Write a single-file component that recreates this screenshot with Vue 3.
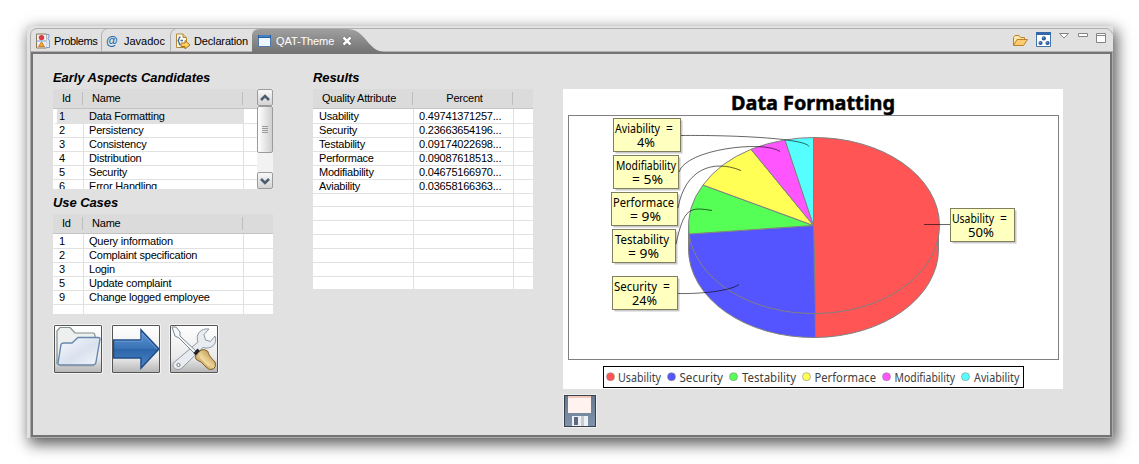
<script setup>
const useCases = [
  [1, 'Query information'], [2, 'Complaint specification'], [3, 'Login'],
  [5, 'Update complaint'], [9, 'Change logged employee'], ['', ''],
]
const aspects = [
  [1, 'Data Formatting'], [2, 'Persistency'], [3, 'Consistency'],
  [4, 'Distribution'], [5, 'Security'], [6, 'Error Handling'],
]
const results = [
  ['Usability', '0.49741371257...'], ['Security', '0.23663654196...'],
  ['Testability', '0.09174022698...'], ['Performace', '0.09087618513...'],
  ['Modifiability', '0.04675166970...'], ['Aviability', '0.03658166363...'],
  ...Array.from({ length: 7 }, () => ['', '']),
]
const labels = [
  { x: 50.5, y: 29.5, w: 67, a: 'Aviability', ax: 52, aw: 45, ex: 103, b: '4%', bx: 74, bw: 18 },
  { x: 50.5, y: 66.5, w: 65, a: 'Modifiability', ax: 53, aw: 60, b: '= 5%', bx: 69, bw: 31 },
  { x: 48.5, y: 103.5, w: 66, a: 'Performace', ax: 50, aw: 61, b: '= 9%', bx: 67, bw: 31 },
  { x: 49.5, y: 140.5, w: 63, a: 'Testability', ax: 52, aw: 54, b: '= 9%', bx: 65, bw: 31 },
  { x: 49.5, y: 187.5, w: 65, a: 'Security', ax: 51, aw: 43, ex: 100, b: '24%', bx: 69, bw: 25 },
  { x: 387.5, y: 119.5, w: 64, a: 'Usability', ax: 389, aw: 42, ex: 437, b: '50%', bx: 405, bw: 26 },
]
const legend = [
  { c: '#ff5555', d: 47.5, x: 55, w: 43, t: 'Usability' },
  { c: '#5555ff', d: 108.5, x: 116.5, w: 43.5, t: 'Security' },
  { c: '#55ff55', d: 170.5, x: 179, w: 54, t: 'Testability' },
  { c: '#ffff55', d: 243.5, x: 251.5, w: 61.5, t: 'Performace' },
  { c: '#ff55ff', d: 323.5, x: 331.5, w: 60.5, t: 'Modifiability' },
  { c: '#55ffff', d: 402.5, x: 411, w: 45.5, t: 'Aviability' },
]
</script>

<template>
  <div class="page">
    <div class="window">
      <header class="strip">
        <svg class="strip-bg" width="1086" height="26" viewBox="27 26 1086 26">
          <defs>
            <linearGradient id="act" x1="0" y1="0" x2="0" y2="1">
              <stop offset="0" stop-color="#a0a0a0" /><stop offset="1" stop-color="#747474" />
            </linearGradient>
          </defs>
          <path d="M30.500 52V35Q31 28.500 38 28.500H1106Q1111 29 1112.500 34" fill="none" stroke="#b0b0b0" />
          <path d="M101.500 52V35Q102 30 107 28.500M170.500 52V35Q171 30 176 28.500" fill="none" stroke="#b0b0b0" />
          <path d="M30 51.500H1113" stroke="#b0b0b0" />
          <path d="M252 52V35Q253 29 259 29H347C357 29 361 34 367 41C372 47 376 51 384 52Z" fill="url(#act)" />
        </svg>
        <nav class="tabs">
          <div class="tab t1">
            <svg width="16" height="16" viewBox="0 0 16 16">
              <path d="M1.500 1H11.500V15H1.500Z" fill="#eaf0fa" stroke="#8b7a55" />
              <path d="M11.500 1.500H14V4L13 5.500L14.500 8V14.500H11" fill="#d9e8fb" stroke="#7b9dca" />
              <path d="M1 8H11" stroke="#7b9dca" /><circle cx="6.500" cy="4.600" r="2.700" fill="#e03740" />
              <path d="M6.500 9L9.500 13.500H3.500Z" fill="#f6ac36" stroke="#cf7c20" />
            </svg><span>Problems</span>
          </div>
          <div class="tab t2"><b class="at">@</b><span>Javadoc</span></div>
          <div class="tab t3">
            <svg width="16" height="16" viewBox="0 0 16 16">
              <path d="M1.500 1H8L11.500 4.500V14.500H1.500Z" fill="#fffaf0" stroke="#b38a36" />
              <path d="M8 1V4.500H11.500" fill="#e9ca86" stroke="#b38a36" />
              <path d="M5.500 4C3 4 5 7.500 2.500 7.500C5 7.500 3 11.500 5.500 12M5.500 7.500H8" fill="none" stroke="#376ba7" stroke-width="1.400" />
              <path d="M6 10H10V7.500L15 12L10 16V13.500H6Z" fill="#ffd45d" stroke="#ac7420" />
            </svg><span>Declaration</span>
          </div>
          <div class="tab t4">
            <svg width="13" height="13" viewBox="0 0 13 13"><path d="M.5.500H12.500V11.500H.5Z" fill="#eef7ff" stroke="#4f79a9" /><path d="M0 0H13V3H0Z" fill="#235fa9" /><path d="M1 1H12" stroke="#67a3e1" /></svg>
            <span>QAT-Theme</span>
            <svg class="close" width="10" height="10" viewBox="0 0 10 10"><path d="M1.500 1.500L8.500 8.500M8.500 1.500L1.500 8.500" stroke="#555" stroke-width="3.800" /><path d="M1.500 1.500L8.500 8.500M8.500 1.500L1.500 8.500" stroke="#fff" stroke-width="2.600" /></svg>
          </div>
        </nav>
        <svg class="tools" width="96" height="22" viewBox="1010 29 96 22">
          <path d="M1013.500 45.500V37.500L1015 35.500H1019L1020.500 37.500H1024.500V39.500" fill="#ffe7a4" stroke="#bd812b" />
          <path d="M1013.500 45.500L1017 39.500H1027.500L1023.500 45.500Z" fill="#fcca70" stroke="#bd812b" />
          <path d="M1036.500 32.500H1050.500V46.500H1036.500Z" fill="#fff" stroke="#4273a9" /><path d="M1036 32H1051V35H1036Z" fill="#3468aa" />
          <g fill="#28599a"><circle cx="1043.800" cy="38.400" r="2.100" /><circle cx="1040.500" cy="43" r="2.100" /><circle cx="1047.500" cy="43" r="2.100" /></g>
          <g fill="#99bce5"><circle cx="1043.200" cy="37.800" r=".7" /><circle cx="1040" cy="42.500" r=".7" /><circle cx="1047" cy="42.500" r=".7" /></g>
          <g fill="#fff" stroke="#858585"><path d="M1059.500 33.500H1068.500L1064 38Z" /><path d="M1078.500 33.500H1087.500V36.500H1078.500Z" /><path d="M1096.500 33.500H1105.500V42.500H1096.500ZM1096.500 35.500H1105.500" /></g>
        </svg>
      </header>

      <main class="view">
        <section class="left">
          <h2>Early Aspects Candidates</h2>
          <div class="scrolled">
            <div class="table aspects">
              <div class="row head"><div>Id</div><div>Name</div><div></div></div>
              <div v-for="(r, i) in aspects" :key="i" class="row" :class="{ selected: i === 0 }"><div>{{ r[0] }}</div><div>{{ r[1] }}</div><div></div></div>
            </div>
            <div class="scrollbar">
              <div class="arrow"><svg width="14" height="15" viewBox="0 0 14 15"><path d="M3 10L7 6L11 10" /></svg></div>
              <div class="thumb"><i></i><i></i><i></i><i></i></div>
              <div class="arrow down"><svg width="14" height="15" viewBox="0 0 14 15"><path d="M3 6L7 10L11 6" /></svg></div>
            </div>
          </div>
          <h2 class="second">Use Cases</h2>
          <div class="table">
            <div class="row head"><div>Id</div><div>Name</div><div></div></div>
            <div v-for="(r, i) in useCases" :key="i" class="row"><div>{{ r[0] }}</div><div>{{ r[1] }}</div><div></div></div>
          </div>
          <div class="buttons">
            <button><svg width="46" height="46" viewBox="0 0 46 46">
              <defs><linearGradient id="fold" x1="0" y1="0" x2="1" y2="1"><stop stop-color="#f7f9fd" /><stop offset=".55" stop-color="#dae2ef" /><stop offset="1" stop-color="#f2f5fa" /></linearGradient></defs>
              <path d="M2 38V5L5 1.500H15L20 7H38Q40 7 40 10V16" fill="#edf0ef" stroke="#80908f" stroke-width="1.200" />
              <path d="M3 37L6 18.500Q6.500 17 9 17H17L23 11.500H43Q45 11.500 45 13L41 36Q40.500 39 38 39H5Q2.500 39 3 37Z" fill="url(#fold)" stroke="#6787ad" stroke-width="1.400" />
              <path d="M5 40H39" stroke="#999" opacity=".6" />
            </svg></button>
            <button><svg width="46" height="46" viewBox="0 0 46 46">
              <defs><linearGradient id="arr" x1="0" y1="0" x2="0" y2="1"><stop stop-color="#6095d2" /><stop offset=".5" stop-color="#3972b5" /><stop offset=".51" stop-color="#2c65a9" /><stop offset="1" stop-color="#4b87c7" /></linearGradient></defs>
              <path d="M.5 14H28V4L46 23L28 42V32H.5Z" fill="url(#arr)" stroke="#204b86" stroke-width="1.500" /><path d="M1.500 15.200H29V7L44 23" fill="none" stroke="#75a7df" opacity=".7" />
            </svg></button>
            <button><svg width="46" height="46" viewBox="0 0 46 46">
              <defs><linearGradient id="hand" x1="0" y1="1" x2="1" y2="0"><stop stop-color="#9d712d" /><stop offset=".5" stop-color="#ecd294" /><stop offset="1" stop-color="#a5752f" /></linearGradient></defs>
              <path d="M3.500 36L27 16C24 8 30 2 38 3L33 8.500L34.500 14L39.500 15.500L44 10C47 18 40 24 32 21.500L11 42C6 46-1 41 3.500 36Z" fill="#e8ebef" stroke="#8e98a4" />
              <circle cx="7.500" cy="39" r="1.600" fill="#fff" stroke="#777" />
              <path d="M1 1L5 1L9 6L9 10L26 26L24 28L8 12L4 10Z" fill="#f5f7f8" stroke="#7d8791" />
              <path d="M22.500 27L26.500 22.500L29 25L25 30Z" fill="#202329" />
              <path d="M25 29.500L30 24Q34 22.500 37 25.500Q37 29 44 36Q46 40 42.500 43Q38 45 35 41Q30 35 26 34Q23 32 25 29.500Z" fill="url(#hand)" stroke="#805d29" />
              <path d="M29 30.500L38 39.500" stroke="#fff0be" stroke-width="1.500" opacity=".6" />
            </svg></button>
          </div>
        </section>

        <section class="middle">
          <h2>Results</h2>
          <div class="table results">
            <div class="row head"><div>Quality Attribute</div><div>Percent</div><div></div></div>
            <div v-for="(r, i) in results" :key="i" class="row"><div>{{ r[0] }}</div><div>{{ r[1] }}</div><div></div></div>
          </div>
        </section>

        <section class="right">
          <svg class="chart" width="500" height="300" viewBox="0 0 500 300">
            <text class="title" x="168" y="21" textLength="164" lengthAdjust="spacingAndGlyphs">Data Formatting</text>
            <rect x="5.500" y="26.500" width="490" height="244" fill="none" stroke="#808080" />
            <g stroke="#808080" stroke-width="1">
              <path d="M250.500 136.500L252.500 248.500A125 88.500 0 0 0 375.500 160V136.500Z" fill="#f55" />
              <path d="M250.500 136.500L252.500 248.500A125 88.500 0 0 1 125.500 160V136.500Z" fill="#55f" />
              <path d="M125.500 136V162L126.500 150V143Z" fill="#5f5" />
              <path d="M250.500 136.500V48.500A125 88 0 0 1 252.500 224.500Z" fill="#f55" />
              <path d="M250.500 136.500L252.500 224.500A125 88 0 0 1 126 145Z" fill="#55f" />
              <path d="M250.500 136.500L126 145A125 88 0 0 1 140 96Z" fill="#5f5" />
              <path d="M250.500 136.500L140 96A125 88 0 0 1 188 60.300Z" fill="#ff5" />
              <path d="M250.500 136.500L188 60.300A125 88 0 0 1 222 51Z" fill="#f5f" />
              <path d="M250.500 136.500L222 51A125 88 0 0 1 250.500 48.500Z" fill="#5ff" />
            </g>
            <g v-for="l in labels" :key="l.a">
              <rect :x="l.x + 2" :y="l.y + 2" :width="l.w" height="33" fill="#c9c9c9" />
              <rect :x="l.x" :y="l.y" :width="l.w" height="33" fill="#ffffc0" stroke="#808060" />
              <text class="label" :x="l.ax" :y="l.y + 14.500" :textLength="l.aw" lengthAdjust="spacingAndGlyphs">{{ l.a }}</text>
              <text v-if="l.ex" class="label" :x="l.ex" :y="l.y + 14.500">=</text>
              <text class="label" :x="l.bx" :y="l.y + 28.500" :textLength="l.bw" lengthAdjust="spacingAndGlyphs">{{ l.b }}</text>
            </g>
            <g fill="none" stroke="#000" stroke-opacity=".6">
              <path d="M118 46.500C167 46 242 49 246 57.500" />
              <path d="M116 83C123 60 201 51 217 62.500" transform="translate(0 0)" />
              <path d="M115 119C122 80 150 70 178 81.500" transform="translate(0 0)" />
              <path d="M113 155C121 118 127 118 149 121.500" />
              <path d="M115 204.500C138 205 167 202 176 195.500" />
              <path d="M361 135.500H387" />
            </g>
            <rect x="40.500" y="277.500" width="420" height="21" fill="#fff" stroke="#000" />
            <g v-for="l in legend" :key="l.t">
              <circle :cx="l.d" cy="287.700" r="4" :fill="l.c" stroke="#888" stroke-width=".6" />
              <text class="label key" :x="l.x" y="292.500" :textLength="l.w" lengthAdjust="spacingAndGlyphs">{{ l.t }}</text>
            </g>
          </svg>
          <svg class="save" width="32" height="32" viewBox="0 0 32 32">
            <defs><linearGradient id="disk" x1="0" y1="0" x2="0" y2="1"><stop stop-color="#66788e" /><stop offset="1" stop-color="#8093aa" /></linearGradient></defs>
            <rect x=".5" y=".5" width="31" height="31" fill="url(#disk)" stroke="#36414e" />
            <path d="M4 1H27V18H4Z" fill="#fff2ef" /><path d="M4 1H27V3H4Z" fill="#f2c9bd" />
            <path d="M8 21H24V31H8Z" fill="#eef1f4" /><path d="M17 21H20V31H17Z" fill="#c8ccd0" /><path d="M10 22H14V30H10Z" fill="#596c82" />
          </svg>
        </section>
      </main>
    </div>
  </div>
</template>

<style>
body { background: #fff; overflow: hidden; }
</style>
<style scoped>
* { box-sizing: border-box; }
.page { width: 1139px; height: 464px; padding: 26px 26px 26px 27px; overflow: hidden; font: 11px "Liberation Sans", sans-serif; color: #000; }
.window { width: 1086px; height: 412px; background: #e1e1e1; box-shadow: 3px 5px 14px 1px rgba(0,0,0,.65); }
.strip { position: relative; height: 26px; display: flex; justify-content: space-between; }
.strip-bg { position: absolute; left: 0; top: 0; }
.tabs { display: flex; padding-left: 8px; position: relative; }
.tab { display: flex; align-items: center; height: 26px; padding-top: 4px; }
.tab span { white-space: nowrap; }
.t1 { width: 71px; gap: 3px; letter-spacing: -.4px; }
.t2 { width: 69px; gap: 5px; }
.t3 { width: 83px; gap: 3px; letter-spacing: -.15px; }
.t4 { color: #fff; gap: 5px; letter-spacing: -.1px; }
.t4 span { width: 61px; }
.at { color: #2868a6; font-size: 12px; width: 13px; }
.tools { position: relative; margin: 3px 7px 0 0; }
.view { margin-left: 4px; width: 1081px; height: 385px; border: 2px solid #747474; box-shadow: 0 0 0 1px #aaa; padding: 16px 0 0 20px; display: flex; background: #e1e1e1; }
.left { width: 260px; }
.middle { width: 250px; }
h2 { margin: 0; height: 19px; font-size: 13px; line-height: 15px; font-style: italic; font-weight: bold; letter-spacing: -.08px; }
.second { margin-top: 6px; }
.table { width: 220px; height: 100px; background: #fff; overflow: hidden; }
.row { display: grid; grid-template-columns: 30px 160px 1fr; height: 14px; line-height: 14px; white-space: nowrap; letter-spacing: -.21px; }
.row > div { border-bottom: 1px solid #e1e1e1; padding-left: 6px; }
.row > div + div { border-left: 1px solid #e1e1e1; padding-left: 5px; }
.head { height: 20px; line-height: 18px; background: #dbdbdb; border-bottom: 1px solid #c4c4c4; }
.head > div, .head > div + div { border: 0; padding-left: 9px; position: relative; }
.head > div:not(:last-child)::after { content: ""; position: absolute; right: 0; top: 3px; height: 13px; width: 1px; background: #bdbdbd; }
.results { height: 200px; }
.results .row { grid-template-columns: 100px 100px 1fr; }
.results .head > div:nth-child(2) { text-align: center; padding: 0 0 0 3px; }
.scrolled { display: flex; }
.aspects { width: 204px; }
.selected > div:nth-child(-n+2) { background: #e1e1e1; }
.selected > div:first-child { border-left: 4px solid #fff; padding-left: 2px; }
.scrollbar { width: 16px; height: 100px; background: #f2f2f2; }
.arrow, .thumb { width: 16px; border: 1px solid #9b9b9b; border-radius: 2px; background: linear-gradient(#f8f8f8, #d4d4d4); }
.arrow { height: 17px; }
.arrow svg { display: block; fill: none; stroke: #4d5d72; stroke-width: 2.500; }
.thumb { height: 47px; background: linear-gradient(90deg, #fff, #cfcfcf); display: flex; flex-direction: column; gap: 1px; align-items: center; justify-content: center; }
.thumb i { width: 6px; height: 1px; background: #999; }
.down { margin-top: 19px; }
.buttons { display: flex; gap: 10px; padding: 11px 0 0 1px; }
button { width: 48px; height: 48px; padding: 0; border: 1px solid #555; border-radius: 1px; background: linear-gradient(#fff, #e9e9e9 70%, #b6b6b6); box-shadow: 0 0 0 1px #f2f2f2; }
button svg { display: block; }
.right { padding-top: 19px; }
.chart { display: block; background: #fff; }
.title { font: bold 20px "Noto Sans", "DejaVu Sans", sans-serif; stroke: #000; stroke-width: .5px; }
.label { font: 12px "Noto Sans", "DejaVu Sans", sans-serif; }
.key { fill: #404040; }
.save { display: block; margin: 6px 0 0 1px; box-shadow: 0 0 0 1px #f0f0f0; }
</style>
